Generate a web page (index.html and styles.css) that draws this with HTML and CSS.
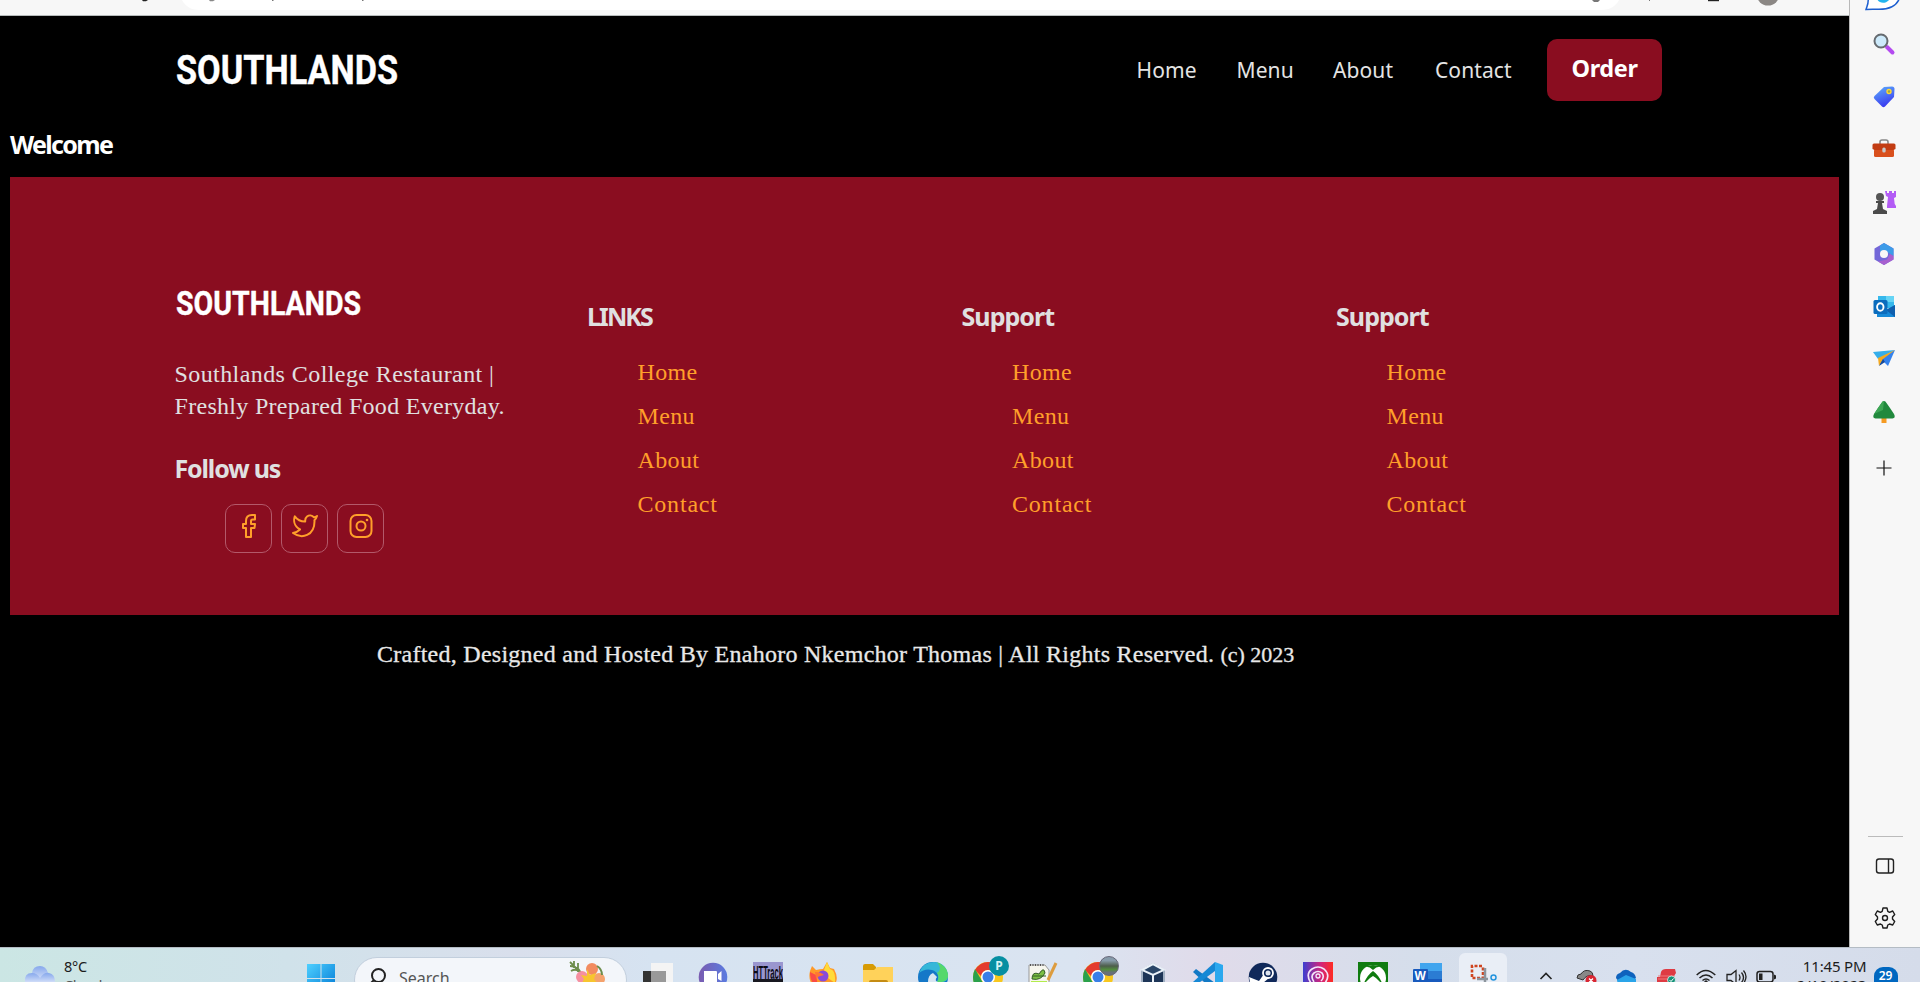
FILE: index.html
```html
<!DOCTYPE html>
<html lang="en">
<head>
<meta charset="utf-8">
<title>Southlands</title>
<link rel="stylesheet" href="styles.css">
</head>
<body>
<div class="browser">
  <div class="viewport">
    <div class="toolbar">
      <svg width="1849" height="15" viewBox="0 0 1849 15">
        <path d="M182 0C185 6 191 10 199 10H1601C1610 10 1616 6 1619 0Z" fill="#fff"/>
        <path d="M142 0h6l-2 1.3h-3z" fill="#222"/>
        <path d="M209 0h6l-2 1.3h-3z" fill="#888"/>
        <path d="M272 0h1.500v1h-1.500zM362 0h1.500v1h-1.500zM1649 0h1v1h-1z" fill="#777"/>
        <path d="M1592 0h8l-2 2h-4z" fill="#777"/><path d="M1708 0h11v1.200h-11z" fill="#222"/>
        <circle cx="1768" cy="-6" r="11.500" fill="#8b8784"/>
      </svg>
    </div>
    <main class="page">
      <header class="site-header">
        <svg class="logo" width="226" height="48" viewBox="0 -7 226 48"><text x="2" y="31" font-size="41" textLength="222" lengthAdjust="spacingAndGlyphs">SOUTHLANDS</text></svg>
        <nav class="nav">
          <a class="nav-home">Home</a><a class="nav-menu">Menu</a><a class="nav-about">About</a><a class="nav-contact">Contact</a>
          <a class="order">Order</a>
        </nav>
      </header>
      <h2 class="welcome">Welcome</h2>
      <footer class="footer">
        <section>
          <svg class="logo logo-small" width="190" height="40" viewBox="0 -7 190 40"><text x="1" y="26" font-size="34" textLength="185" lengthAdjust="spacingAndGlyphs">SOUTHLANDS</text></svg>
          <p class="tagline"><span class="line-a">Southlands College Restaurant |</span><br>Freshly Prepared Food Everyday.</p>
          <h3 class="follow">Follow us</h3>
          <div class="social">
            <a><svg width="26" height="26" viewBox="0 0 26 26"><path d="M19 2H16C12 2 10 4.500 10 8v3H7v4h3v9h5v-9h3.500l.5-4h-4V8c0-1 .5-1.500 1.500-1.500H19z"/></svg></a>
            <a><svg width="26" height="26" viewBox="0 0 26 26"><path d="M25 3c-1 .6-2 1-3 1.300C20 2 17 2 15 3.500 13.700 4.500 13 6 13.200 8.500 9 8.600 5.500 7 2.800 3.300 1.200 8 2.500 13.500 8 16.500 6 18.500 4 19.500 1 20c9 6.500 21.500 2.500 21.500-11.500 0-.5 0-.9-.1-1.300C23.700 6 24.500 4.700 25 3z"/></svg></a>
            <a><svg width="26" height="26" viewBox="0 0 26 26"><rect x="2.500" y="2" width="21" height="22" rx="6"/><circle cx="13" cy="13" r="4.500"/><circle class="dot" cx="19" cy="7" r="1.300"/></svg></a>
          </div>
        </section>
        <section class="links"><h3 class="caps">LINKS</h3><ul><li>Home</li><li>Menu</li><li>About</li><li class="wide">Contact</li></ul></section>
        <section class="links"><h3>Support</h3><ul><li>Home</li><li>Menu</li><li>About</li><li class="wide">Contact</li></ul></section>
        <section class="links"><h3>Support</h3><ul><li>Home</li><li>Menu</li><li>About</li><li class="wide">Contact</li></ul></section>
      </footer>
      <p class="copyright">Crafted, Designed and Hosted By Enahoro Nkemchor Thomas | All Rights Reserved. <span class="year">(c) 2023</span></p>
    </main>
  </div>
  <aside class="rail">
    <svg class="chat" width="40" height="14" viewBox="0 0 40 14"><path d="M4-2C5 3 3 6 2 9.500c6-.6 8-.2 13-.2C25 9.300 34 6 36-4z" fill="#fff" stroke="#1d5fd0" stroke-width="1.500"/><path d="M13-1c2 4 8 6 13 0z" fill="#22b4ee"/></svg>
    <div class="rail-icons">
      <svg viewBox="0 0 24 24"><path d="M15 15l5.500 5.500" stroke="#b44af0" stroke-width="4" stroke-linecap="round"/><circle cx="9" cy="9" r="6.500" fill="#cdeafb" stroke="#666b70" stroke-width="2"/></svg>
      <svg viewBox="0 0 24 24"><defs><linearGradient id="tag" x2=".4" y2="1"><stop stop-color="#5fb3fb"/><stop offset="1" stop-color="#3a3cf0"/></linearGradient></defs><path d="M12 2l8-.5q2.500 0 2.500 2.500l-.5 8-9 9.500q-1.500 1.500-3 0L2.500 14q-1.500-1.500 0-3z" fill="url(#tag)"/><circle cx="17" cy="6.500" r="2" fill="#9aa64c" stroke="#ffd82f" stroke-width="1.400"/></svg>
      <svg viewBox="0 0 24 24"><path d="M8 7V5q0-2 2-2h4q2 0 2 2v2" fill="none" stroke="#888" stroke-width="1.600"/><rect x="2" y="12" width="20" height="8" rx="1.500" fill="#d9501d"/><path d="M.5 8q0-1.500 1.500-1.500h20q1.500 0 1.500 1.500v4l-2 1h-19l-2-1z" fill="#c23c12"/><rect x="10.300" y="10.500" width="3.400" height="5" rx="1.500" fill="#c8c8c8"/></svg>
      <svg viewBox="0 0 24 24"><path d="M13 1h2v2h2V1h3v2h2V1h2v6l-2 1 .7 6 1.300 2v2h-9v-2l1-9-2-1z" fill="#b35cf5"/><circle cx="8" cy="7" r="4" fill="#555"/><path d="M4 11h8v2h-2l1 6 4 2v3H1v-3l4-2 1-6H4z" fill="#4b4b4b"/></svg>
      <svg viewBox="0 0 24 24"><path d="M12 1l9.500 5.500v11L12 23l-9.500-5.500v-11z" fill="#7367d8"/><path d="M12 1l9.500 5.500V14L15 10l-3-2-4 2V3.500z" fill="#3d9be8"/><path d="M21.500 14v3.500L12 23l-6-3.500 9-2 3-5.500z" fill="#a760cf"/><circle cx="12" cy="12" r="4" fill="#f7f7f7"/></svg>
      <svg viewBox="0 0 24 24"><path d="M6 1h16v12H6z" fill="#36b8ec"/><path d="M14 1h8v6h-8z" fill="#65d4f5"/><path d="M5 12l9 3 9-5v12H5z" fill="#1689d8"/><path d="M23 10v12l-9-7z" fill="#0f5fae"/><rect x="1.500" y="5" width="14" height="14" rx="1.500" fill="#0b6cbd"/><ellipse cx="8.300" cy="12" rx="3.200" ry="3.800" fill="none" stroke="#fff" stroke-width="1.900"/></svg>
      <svg viewBox="0 0 24 24"><path d="M1 5l22-2-17 9z" fill="#35aeea"/><path d="M23 3l-7 16-4-4-4 3V11z" fill="#3482ed"/><path d="M6 11l17-8-12 9-4 7z" fill="#f5a91f"/><path d="M7 19l4-7 2 3z" fill="#15499b"/></svg>
      <svg viewBox="0 0 24 24"><path d="M9.500 17h5v6h-5z" fill="#f59b23"/><path d="M12 1q1.500 0 2.500 2L18 8l4 6q2 4-1.500 4.500h-17Q0 18 2 14l4-6 3.500-5Q10.500 1 12 1z" fill="#21893d"/><path d="M12 1q-1.500 0-2.500 2L6 8l-4 6 9-4z" fill="#3da655"/></svg>
      <svg viewBox="0 0 24 24"><path d="M12 4.500v15M4.500 12h15" stroke="#111" stroke-width="1.200"/></svg>
    </div>
    <div class="rail-bottom">
      <svg viewBox="0 0 24 24" fill="none" stroke="#222" stroke-width="1.400"><rect x="3.500" y="5" width="17" height="14" rx="2.500"/><path d="M15.500 5v14"/></svg>
      <svg viewBox="0 0 24 24" fill="none" stroke="#1d1d1d" stroke-width="1.400" stroke-linejoin="round"><path d="M10 2h4l.8 3.300 1.700 1L19.700 5l2 3.500-2.200 2.500v2l2.200 2.500-2 3.500-3.200-1-1.700 1L14 22h-4l-.8-3-1.700-1-3.200 1-2-3.500L4.500 13v-2L2.300 8.500l2-3.500 3.200 1.300 1.700-1z"/><circle cx="12" cy="12" r="2.500"/></svg>
    </div>
  </aside>
</div>
<div class="taskbar">
  <div class="weather">
    <svg width="32" height="18" viewBox="0 0 32 18"><defs><linearGradient id="cl" x2="0" y2="1"><stop stop-color="#86a8ec"/><stop offset="1" stop-color="#cfdcf8"/></linearGradient></defs><path d="M8 9q1-7 8-7 6 0 8 7v6H8z" fill="url(#cl)"/><path d="M1 18Q0 9 8 9q5 0 8 5 4-6 9-5 6 1 6 9z" fill="url(#cl)"/></svg>
    <div class="temp">8°C<br><span>Cloudy</span></div>
  </div>
  <svg class="start" width="30" height="30" viewBox="0 0 30 30"><defs><linearGradient id="win" x2="1" y2="1"><stop stop-color="#4fd0ff"/><stop offset="1" stop-color="#0078d4"/></linearGradient></defs><path d="M1 1h13.500v14H1zM15.500 1H29v14H15.500zM1 16h13.500v13H1zM15.500 16H29v13H15.500z" fill="url(#win)"/></svg>
  <div class="search">
    <svg width="18" height="22" viewBox="0 0 18 22"><circle cx="9.500" cy="7.500" r="6.500" fill="none" stroke="#222" stroke-width="2"/><path d="M5 12l-5 5" stroke="#222" stroke-width="2"/></svg>
    <span>Search</span>
    <svg class="flower" width="38" height="26" viewBox="0 0 38 26"><path d="M2 5q8 0 11 7M3 10q5-3 9 1M6 0v7M10 2v9M2 1l8 8" stroke="#6d8d4c" stroke-width="1.800" fill="none"/><circle cx="24" cy="8" r="6" fill="#f28b60"/><circle cx="14" cy="16" r="6" fill="#f58fa0"/><circle cx="31" cy="18" r="6" fill="#f4a26d"/><path d="M19 8l3 6 6-2-2 6 5 6H13l3-6-3-4 6 1z" fill="#f7c52f"/><path d="M29 5q5 3 5 9" fill="none" stroke="#6d8d4c" stroke-width="2"/></svg>
  </div>
  <div class="apps">
    <div><svg viewBox="0 0 30 30"><rect x="8" y="1" width="22" height="22" fill="#f4f4f4"/><rect y="9" width="23" height="21" fill="#333"/><path d="M8 9h15v15H8z" fill="#999"/></svg></div>
    <div><svg viewBox="0 0 30 30"><defs><linearGradient id="meet" x2="1"><stop stop-color="#7a5cb0"/><stop offset="1" stop-color="#5a7be0"/></linearGradient></defs><circle cx="15" cy="15" r="14.300" fill="url(#meet)"/><path d="M6 9h12q1 0 1 1v10H6zM20 12l3.500-3v10L20 17z" fill="#fff"/></svg></div>
    <div><svg viewBox="0 0 30 30"><path d="M0 0h30v30H0z" fill="#9a96cf"/><path d="M0 17h30v13H0z" fill="#181820"/><text x="0" y="16.500" font-family="Liberation Sans" font-size="18" font-weight="700" fill="#0b0b16" textLength="30" lengthAdjust="spacingAndGlyphs">HTTrack</text></svg></div>
    <div><svg viewBox="0 0 30 30"><path d="M2 9l2-5 4 4q4-1 7-1L19 0l3 6 4 1q5 9 1 15-6 8-16 6Q-1 22 2 9z" fill="#ff9a28"/><path d="M19 0l3 7q6 1 5 14l-7-5-4-8z" fill="#ffdb3a"/><path d="M2 10q0 12 8 14l-2-11z" fill="#fa4b45"/><circle cx="15" cy="14" r="5.500" fill="#884bd8"/><path d="M7 10q6 0 9 3-5 1-8 3z" fill="#ff7433"/></svg></div>
    <div><svg viewBox="0 0 30 30"><path d="M0 4q0-2 2-2h8l3 3v4H0z" fill="#d79b05"/><path d="M0 8h11l3-3h16v25H0z" fill="#ffd25a"/><path d="M6 20q0-2 2-2h15q2 0 2 2z" fill="#c58c13"/></svg></div>
    <div><svg viewBox="0 0 30 30"><circle cx="15" cy="15" r="15" fill="#1578c8"/><path d="M1 11Q5 0 16 0q13 1 14 14 0 6-7 6h-4q4-9-5-12Q7 6 1 11z" fill="#35b7d8"/><path d="M19 0q12 5 11 15-2 6-11 5 3-5 0-9 6-4 0-11z" fill="#55d86c"/><path d="M10 20q0-7 5-9l4 4q-3 4 1 5z" fill="#d8e6f2"/></svg></div>
    <div><svg viewBox="0 0 30 30"><circle cx="15" cy="15" r="15" fill="#f8c71e"/><path d="M2 8Q7 0 15 0q9 0 13 8H15q-5 0-7 6z" fill="#e33b2e"/><path d="M2 7l7 12 6 11Q0 29 0 15q0-4 2-8z" fill="#2aa14b"/><circle cx="15" cy="15" r="7" fill="#fff"/><circle cx="15" cy="15" r="5.500" fill="#397fe6"/></svg><b class="badge">P</b></div>
    <div><svg viewBox="0 0 30 30"><path d="M1 3h16l4 5v22H1z" fill="#f6f6ee" stroke="#999"/><path d="M2 3h15" stroke="#555" stroke-width="2" stroke-dasharray="1 1.500"/><path d="M3 19h16v11H3z" fill="#b3ec4d"/><path d="M4 17q0-8 7-5 5-8 6-1-4 8-13 6zM5 14h13" stroke="#335d26" fill="#7bbf43"/><path d="M28 1L20 18" stroke="#dd9c3e" stroke-width="3"/></svg></div>
    <div><svg viewBox="0 0 30 30"><circle cx="15" cy="15" r="15" fill="#f8c71e"/><path d="M2 8Q7 0 15 0q9 0 13 8H15q-5 0-7 6z" fill="#e33b2e"/><path d="M2 7l7 12 6 11Q0 29 0 15q0-4 2-8z" fill="#2aa14b"/><circle cx="15" cy="15" r="7" fill="#fff"/><circle cx="15" cy="15" r="5.500" fill="#397fe6"/></svg><b class="badge avatar"></b></div>
    <div><svg viewBox="0 0 30 30"><path d="M15 1l12 7v15l-12 7-12-7V8z" fill="#1d3557"/><path d="M4 8l11-6 11 6-11 5zM15 13v16" stroke="#eaf1f8" stroke-width="2" fill="#2a4668"/><path d="M4 8v14M26 8v14" stroke="#cdd9e6" stroke-width="1.500"/></svg></div>
    <div><svg viewBox="0 0 30 30"><path d="M22 0l8 3v24l-8 3z" fill="#2ba8ee"/><path d="M0 10l3-3 19 14v9z" fill="#1279c5"/><path d="M22 0v9L3 23l-3-3z" fill="#1688d5"/></svg></div>
    <div><svg viewBox="0 0 30 30"><circle cx="15" cy="15" r="14.300" fill="#10295a"/><path d="M1 15l10 4 5-7 5 4-6 5-4 4L2 20z" fill="#fff"/><circle cx="20" cy="11" r="5" fill="#10295a" stroke="#fff" stroke-width="1.800"/><circle cx="20" cy="11" r="2.500" fill="#dfe5ef"/></svg></div>
    <div><svg viewBox="0 0 30 30"><defs><linearGradient id="rb" x2="1"><stop stop-color="#3d3fd1"/><stop offset=".6" stop-color="#d2247a"/><stop offset="1" stop-color="#ff2c22"/></linearGradient></defs><path d="M0 0h30v30H0z" fill="url(#rb)"/><path d="M8 21Q2 12 9 7q6-4 12 0 7 6 1 14M11 20q-4-6 0-9 4-3 8 0 3 4-1 8" fill="none" stroke="#f4e6fa" stroke-width="1.600"/><circle cx="15" cy="14" r="2" fill="none" stroke="#f4e6fa" stroke-width="1.300"/></svg></div>
    <div><svg viewBox="0 0 30 30"><path d="M0 0h30v30H0z" fill="#107c10"/><circle cx="15" cy="16" r="13" fill="#fff"/><path d="M7 5q4-1 8 3 4-4 8-3-4-2-8-2T7 5zM4 26q4-12 11-17 7 5 11 17-5-9-11-12-6 3-11 12z" fill="#107c10"/></svg></div>
    <div><svg viewBox="0 0 30 30"><path d="M7 1h22v29H7z" fill="#185abd"/><path d="M7 1h22v8H7z" fill="#41a5ee"/><path d="M7 9h22v8H7z" fill="#2b7cd3"/><rect y="7" width="15" height="17" rx="1" fill="#185abd"/><text x="1.500" y="18" font-family="Liberation Sans" font-size="12" font-weight="700" fill="#fff">W</text></svg></div>
    <div class="active"><svg viewBox="0 0 30 30"><path d="M14 4H4v12h11V4" fill="none" stroke="#cf4520" stroke-width="2.600" stroke-dasharray="3 1.500"/><path d="M17 6v15M9 17h11" stroke="#8c949c" stroke-width="2.500"/><circle cx="25.500" cy="15.500" r="2.500" fill="none" stroke="#2494dd" stroke-width="1.500"/></svg></div>
  </div>
  <div class="tray">
    <svg class="up" width="14" height="22" viewBox="0 0 14 22"><path d="M1.500 10L7 4.500l5.500 5.500" fill="none" stroke="#222" stroke-width="1.600"/></svg>
    <svg class="t1" width="22" height="22" viewBox="0 0 22 22"><path d="M1 9q0-4 4-4 3-5 9-3 3 1 3 5-6-2-10 4z" fill="#888" stroke="#333"/><circle cx="15" cy="11.500" r="5.500" fill="#d92632"/><path d="M13 9.500l4 4m0-4l-4 4" stroke="#fff" stroke-width="1.300"/></svg>
    <svg class="t2" width="20" height="22" viewBox="0 0 20 22"><path d="M0 9q0-4 4-5 5-6 11-1 4 1 5 6l-5 4H3z" fill="#0e62bd"/><path d="M1 11l9-5 10 4v6H2z" fill="#2aa4e9"/></svg>
    <svg class="t3" width="20" height="22" viewBox="0 0 20 22"><path d="M5 3q1-3 5-3h9l1 4-2 3v14H1V8h3z" fill="#de3b43"/><path d="M2 7h17M2 10h17" stroke="#ee7a7d"/><circle cx="15.500" cy="11" r="4" fill="#159278" stroke="#fff" stroke-width=".7"/><path d="M13.500 11l1.500 1.500 2.500-3" fill="none" stroke="#fff"/></svg>
    <svg class="t4" width="20" height="22" viewBox="0 0 20 22" fill="none" stroke="#222" stroke-width="1.500"><path d="M.7 6q9-9 18.600 0M3.500 9q6.500-6 13 0M6.500 11.500q3.500-3 7 0"/><circle cx="10" cy="13" r="1"/></svg>
    <svg class="t5" width="21" height="22" viewBox="0 0 21 22" fill="none" stroke="#222" stroke-width="1.300"><path d="M1 5.500h4l5-4v14l-5-4H1zM13 5.500q2 3 0 6M15.500 3.500q4 5 0 10M17.500 1.500q5 6 0 13"/></svg>
    <svg class="t6" width="21" height="22" viewBox="0 0 21 22"><rect x="1" y="2.500" width="16" height="10.500" rx="2.500" fill="none" stroke="#222" stroke-width="1.500"/><path d="M3 4.500h3.500v6.500H3zM18 5.500l2 1v3l-2 1z" fill="#222"/></svg>
    <div class="clock">11:45 PM<br>2/10/2023</div>
    <div class="count">29</div>
  </div>
</div>
</body>
</html>
```

FILE: styles.css
```css
* { box-sizing: border-box; }
body { margin: 0; width: 1920px; height: 982px; overflow: hidden; background: #000; font-family: "Noto Sans", sans-serif; }
svg { display: block; flex: none; }
h2, h3, p, ul { margin: 0; padding: 0; }
.browser { display: flex; height: 947px; }
.viewport { width: 1849px; flex: none; }
.toolbar { height: 16px; background: #f7f7f7; border-bottom: 1px solid #b6bbbb; }
.page { height: 931px; background: #000; padding: 0 10px; }

.site-header { height: 108px; padding: 23px 177px 0 164px; display: flex; align-items: flex-start; justify-content: space-between; }
.logo { font-family: "Roboto", sans-serif; font-weight: 700; fill: #fff; stroke: #fff; stroke-width: .4px; }
.site-header .logo { margin-top: 7px; }
.nav { display: flex; align-items: center; height: 62px; color: #e4e4e4; font-size: 21px; line-height: 32px; white-space: nowrap; letter-spacing: .1px; }
.nav-home { width: 100px; }
.nav-menu { width: 96.5px; }
.nav-about { width: 102px; }
.nav-contact { width: 112px; }
.order { width: 115px; height: 62px; border-radius: 10px; background: #8a0d20; color: #fff; font-size: 23.5px; font-weight: 700; line-height: 59px; text-align: center; letter-spacing: -.4px; }

.welcome { height: 53px; color: #fff; font-size: 25px; line-height: 40px; letter-spacing: -1.65px; }
.footer { height: 438px; background: #8a0d20; padding: 105px 0 0 164.5px; display: grid; grid-template-columns: 412.5px 374.5px 374.5px 1fr; align-content: start; color: #e0e0e0; }
.footer h3 { font-size: 25px; line-height: 32px; letter-spacing: -.95px; }
.footer .caps { letter-spacing: -1.900px; }
.tagline { margin-top: 36px; font: 24px/32px "Liberation Serif", serif; letter-spacing: .3px; white-space: nowrap; }
.line-a { letter-spacing: .42px; }
.footer .follow { margin-top: 30px; letter-spacing: -1.150px; }
.social { display: flex; gap: 9px; margin: 20px 0 0 50px; }
.social a { width: 47px; height: 49px; padding: 8px 10px; border: 1px solid #b3596a; border-radius: 10px; }
.social svg { fill: none; stroke: #ff9f2a; stroke-width: 2; stroke-linejoin: round; }
.social .dot { fill: #ff9f2a; stroke: none; }
.links { padding-top: 18px; }
.links ul { list-style: none; margin-top: 18px; padding-left: 50.500px; color: #ff9f2a; font: 24px/44px "Liberation Serif", serif; letter-spacing: .35px; }
.links .wide { letter-spacing: .8px; }
.copyright { margin: 23px 0 0 367px; color: #e8e8e8; font: 24px/32px "Liberation Serif", serif; letter-spacing: .26px; white-space: nowrap; -webkit-text-stroke: .3px #e8e8e8; }
.year { font-size: 22px; letter-spacing: 0; }

.rail { flex: 1; background: #f7f7f7; display: flex; flex-direction: column; align-items: center; border-left: 1px solid #b8b8b8; }
.chat { margin-right: 2px; }
.rail-icons { display: flex; flex-direction: column; gap: 28.5px; margin: 18px 1.500px 0 0; }
.rail-icons svg, .rail-bottom svg { width: 24px; height: 24px; fill-rule: evenodd; }
.rail-icons svg:last-child { margin-top: 4px; }
.rail-bottom { margin-top: auto; height: 111px; width: 35px; border-top: 1px solid #bbb; padding-top: 17px; display: flex; flex-direction: column; align-items: center; gap: 28px; }

.taskbar { height: 35px; overflow: hidden; border-top: 1px solid #b4bcc4; display: flex; align-items: flex-start; background: linear-gradient(90deg, #cbe6e4 0, #d0e2ea 15%, #d9dfec 27%, #d6e3f1 34%, #dae4f1 56%, #e0dbea 63%, #d5deeb 74%, #d8e0ee 85%, #d5dcea 100%); color: #1c1c1c; }
.weather { width: 306px; padding: 16px 0 0 24px; display: flex; flex: none; }
.temp { margin: -7px 0 0 8px; font-size: 14.500px; line-height: 19px; letter-spacing: -.3px; }
.temp span { color: #555; }
.start { margin-top: 15px; }
.search { margin: 9px 0 0 18px; width: 273px; height: 46px; flex: none; border-radius: 23px; border: 1px solid #c2cfdd; background: #f3f6fa; display: flex; align-items: flex-start; padding: 10px 20px 0 14px; }
.search span { margin-left: 12px; font-size: 16px; line-height: 20px; color: #555; }
.flower { margin: -7px 0 0 auto; }
.apps { display: grid; grid-template-columns: repeat(16, 55px); margin-left: 3.500px; flex: none; }
.apps div { position: relative; height: 48px; padding: 14px 12.500px 0; }
.apps svg { width: 30px; height: 30px; }
.apps .active { margin: 5px 3.500px 0; padding: 9px 9px 0; border-radius: 6px; background: #e9eef6; }
.badge { position: absolute; left: 28.500px; top: 8px; width: 20px; height: 20px; border-radius: 50%; background: #078fa2; color: #d8f3f5; font-size: 12px; line-height: 20px; text-align: center; }
.avatar { background: linear-gradient(#879baa 20%, #4d5d4b 50%, #528c3e 70%, #687078 85%); border: 1px solid #667; }
.tray { display: flex; flex: 1; padding-top: 21px; }
.up { margin-left: 28px; }
.t1 { margin-left: 23px; }
.t2 { margin-left: 18px; }
.t3 { margin-left: 20px; }
.t4 { margin-left: 20px; }
.t5 { margin-left: 10px; }
.t6 { margin-left: 9px; }
.clock { width: 90px; margin-top: -12px; text-align: right; font-size: 15px; line-height: 18.500px; letter-spacing: -.15px; white-space: nowrap; }
.count { margin: -2px 0 0 7px; width: 24px; height: 24px; flex: none; border-radius: 9px; background: #0067c0; color: #fff; font-size: 12px; line-height: 18px; font-weight: 600; text-align: center; }
```
